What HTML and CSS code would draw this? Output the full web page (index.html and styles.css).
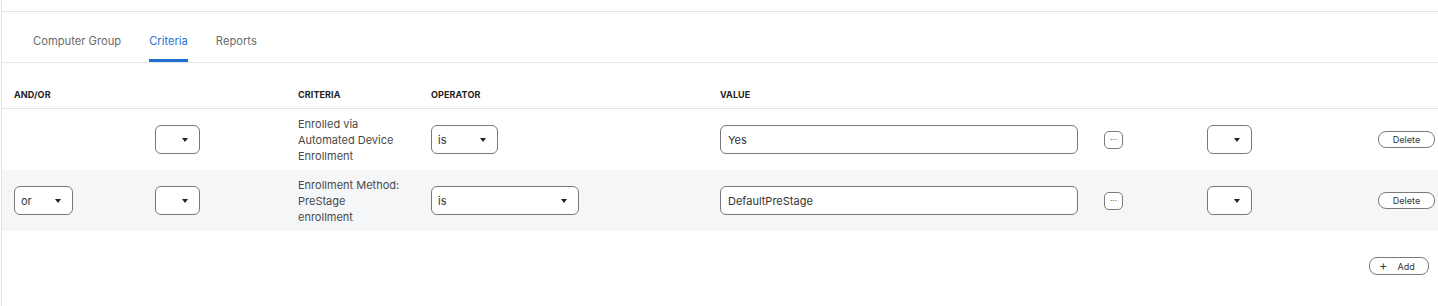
FILE: index.html
```html
<!DOCTYPE html>
<html lang="en">
<head>
<meta charset="utf-8">
<title>Smart Computer Group – Criteria</title>
<link rel="stylesheet" href="styles.css">
</head>
<body>
<div class="page">
  <div class="topbar"></div>
  <nav class="tabs">
    <a class="tab">Computer Group</a>
    <a class="tab active">Criteria</a>
    <a class="tab">Reports</a>
  </nav>

  <div class="grid head">
    <div>AND/OR</div>
    <div></div>
    <div>CRITERIA</div>
    <div>OPERATOR</div>
    <div>VALUE</div>
    <div></div>
    <div></div>
    <div></div>
  </div>

  <div class="grid row">
    <div></div>
    <div><span class="select w45"><span class="caret"></span></span></div>
    <div class="crit">Enrolled via<br>Automated Device<br>Enrollment</div>
    <div><span class="select w67"><span class="val">is</span><span class="caret"></span></span></div>
    <div><span class="input">Yes</span></div>
    <div><span class="more">···</span></div>
    <div><span class="select w45"><span class="caret"></span></span></div>
    <div><span class="btn del">Delete</span></div>
  </div>

  <div class="grid row alt">
    <div><span class="select w59"><span class="val">or</span><span class="caret"></span></span></div>
    <div><span class="select w45"><span class="caret"></span></span></div>
    <div class="crit">Enrollment Method:<br>PreStage<br>enrollment</div>
    <div><span class="select w148"><span class="val">is</span><span class="caret"></span></span></div>
    <div><span class="input">DefaultPreStage</span></div>
    <div><span class="more">···</span></div>
    <div><span class="select w45"><span class="caret"></span></span></div>
    <div><span class="btn del">Delete</span></div>
  </div>

  <div class="footer">
    <span class="btn add"><span class="plus">+</span>Add</span>
  </div>
</div>
</body>
</html>
```

FILE: styles.css
```css
* { box-sizing: border-box; }
html, body { margin: 0; padding: 0; background: #fff; }
body {
  font-family: Inter, "Noto Sans", "Liberation Sans", sans-serif;
  color: #333;
  height: 306px;
  overflow: hidden;
}
.page {
  margin-left: 1px;
  border-left: 1px solid #e3e3e3;
  height: 306px;
}
.topbar {
  height: 12px;
  border-bottom: 1px solid #e3e3e3;
}
.tabs {
  display: flex;
  gap: 28px;
  padding-left: 31px;
  border-bottom: 1px solid #e6e6e6;
}
.tab {
  font-size: 11.2px;
  line-height: 16px;
  color: #6b6b6b;
  padding: 21px 0 10px;
  border-bottom: 3px solid transparent;
}
.tab.active {
  color: #2a72d0;
  border-bottom-color: #1f6fd1;
}
.grid {
  display: grid;
  grid-template-columns: 141px 143px 133px 289px 384px 103px 171px 1fr;
  padding-left: 12px;
  align-items: center;
}
.head {
  height: 46px;
  align-items: end;
  padding-bottom: 8px;
  font-size: 9px;
  font-weight: 700;
  color: #222;
  letter-spacing: 0.1px;
  border-bottom: 1px solid #e3e3e3;
}
.row { height: 61px; }
.row > div { display: flex; align-items: center; }
.row > div.crit { display: block; }
.row.alt { background: #f5f6f8; }
.crit {
  font-size: 11px;
  line-height: 16px;
  color: #4a4a4a;
}
.select {
  display: flex;
  align-items: center;
  justify-content: space-between;
  height: 29px;
  border: 1px solid #787878;
  border-radius: 6px;
  background: #fff;
  padding: 0 11px 0 6px;
  font-size: 11px;
  color: #333;
}
.w45 { width: 45px; }
.w59 { width: 59px; }
.w67 { width: 67px; }
.w148 { width: 148px; }
.select .caret {
  margin-left: auto;
  width: 0;
  height: 0;
  border-left: 3px solid transparent;
  border-right: 3px solid transparent;
  border-top: 4px solid #222;
}
.input {
  display: flex;
  align-items: center;
  width: 358px;
  height: 29px;
  border: 1px solid #787878;
  border-radius: 6px;
  background: #fff;
  padding-left: 7px;
  font-size: 11px;
  color: #333;
}
.more {
  display: flex;
  align-items: center;
  justify-content: center;
  width: 19px;
  height: 18px;
  border: 1px solid #7a7a7a;
  border-radius: 5px;
  background: #fff;
  font-size: 8px;
  line-height: 1;
  color: #333;
  padding-bottom: 1px;
}
.btn {
  display: inline-flex;
  align-items: center;
  justify-content: center;
  height: 17px;
  border: 1px solid #7a7a7a;
  border-radius: 8px;
  background: #fff;
  font-size: 9px;
  color: #333;
}
.del { width: 57px; }
.footer {
  display: flex;
  justify-content: flex-end;
  padding: 26px 9px 0 0;
}
.add {
  width: 60px;
  height: 18px;
  justify-content: flex-start;
  padding-left: 9px;
}
.plus {
  font-size: 13px;
  line-height: 1;
  margin-right: 10px;
  margin-top: -2px;
  color: #444;
}
```
